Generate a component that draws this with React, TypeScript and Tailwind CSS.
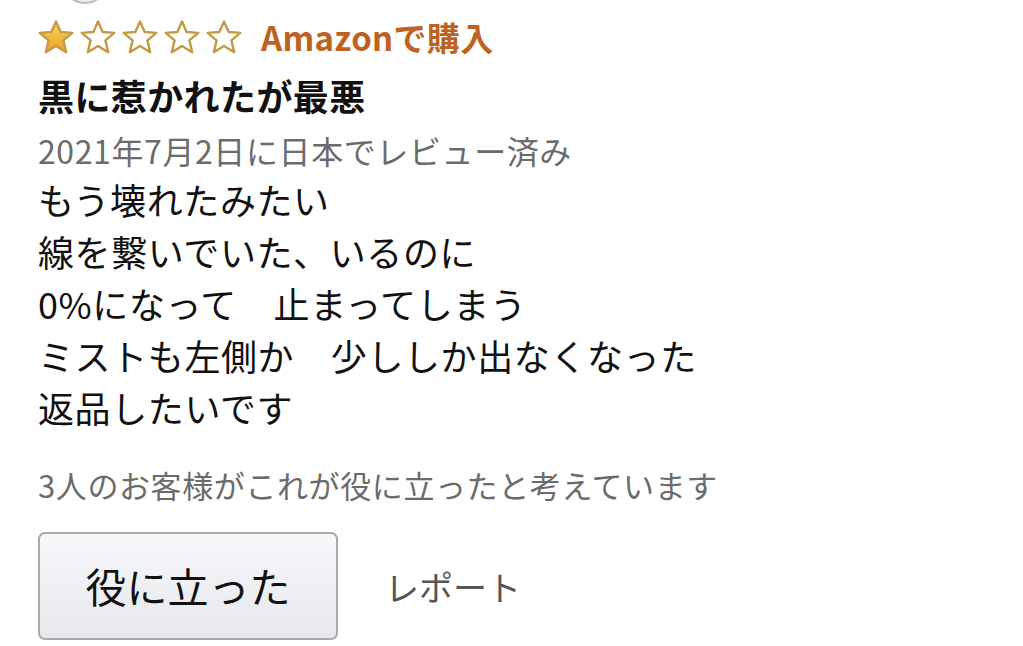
const Star = ({ filled }: { filled?: boolean }) => (
  <svg width="36" height="34" viewBox="0 0 36 34">
    <defs>
      <linearGradient id="gold" x1="0" y1="0" x2="0" y2="1">
        <stop offset="0" stopColor="#f9d35c" />
        <stop offset="1" stopColor="#e9a326" />
      </linearGradient>
    </defs>
    <path
      d="M18 1.5 L22.6 12 L34.3 12.9 L25.4 20.4 L28.2 32.2 L18 25.9 L7.8 32.2 L10.6 20.4 L1.7 12.9 L13.4 12 Z"
      fill={filled ? 'url(#gold)' : '#ffffff'}
      stroke="#c49a45"
      strokeWidth="2.4"
      strokeLinejoin="round"
    />
  </svg>
)

const lines = [
  'もう壊れたみたい',
  '線を繋いでいた、いるのに',
  '0%になって　止まってしまう',
  'ミストも左側か　少ししか出なくなった',
  '返品したいです',
]

export default function App() {
  return (
    <div
      className="w-[1023px] h-[646px] overflow-hidden bg-white text-[#111]"
      style={{ fontFamily: '"Noto Sans CJK JP", "Noto Sans", sans-serif' }}
    >
      <div className="ml-[62px] -mt-[44px] w-[46px] h-[48px] rounded-full border-2 border-[#bdbdbd] bg-[#ececec]" />
      <div className="px-[38px]">
        <div className="mt-[13px] h-[40px] flex items-center">
          <div className="flex gap-[6px]">
            <Star filled />
            <Star />
            <Star />
            <Star />
            <Star />
          </div>
          <span className="ml-[19px] text-[33px] font-semibold text-[#c0621f] leading-[40px] tracking-[0.3px]">
            Amazonで購入
          </span>
        </div>
        <h1 className="mt-[15px] text-[36px] font-bold leading-[46px] tracking-[0.4px]">
          黒に惹かれたが最悪
        </h1>
        <p className="mt-[12px] text-[32px] leading-[40px] tracking-[0.6px] text-[#6b6b6b]">
          2021年7月2日に日本でレビュー済み
        </p>
        <div className="mt-[3px] text-[36px] leading-[52px] tracking-[0.6px]">
          {lines.map((l) => (
            <p key={l}>{l}</p>
          ))}
        </div>
        <p className="mt-[32px] text-[31px] leading-[40px] tracking-[0.6px] text-[#6b6b6b]">
          3人のお客様がこれが役に立ったと考えています
        </p>
        <div className="mt-[27px] flex items-center">
          <button className="w-[300px] h-[108px] rounded-[7px] border-2 border-[#a9a9a9] bg-gradient-to-b from-[#f7f8fa] to-[#e6e8ec] text-[41px] text-[#111] flex items-center justify-center">
            役に立った
          </button>
          <span className="ml-[47px] text-[34px] text-[#555]">レポート</span>
        </div>
      </div>
    </div>
  )
}
